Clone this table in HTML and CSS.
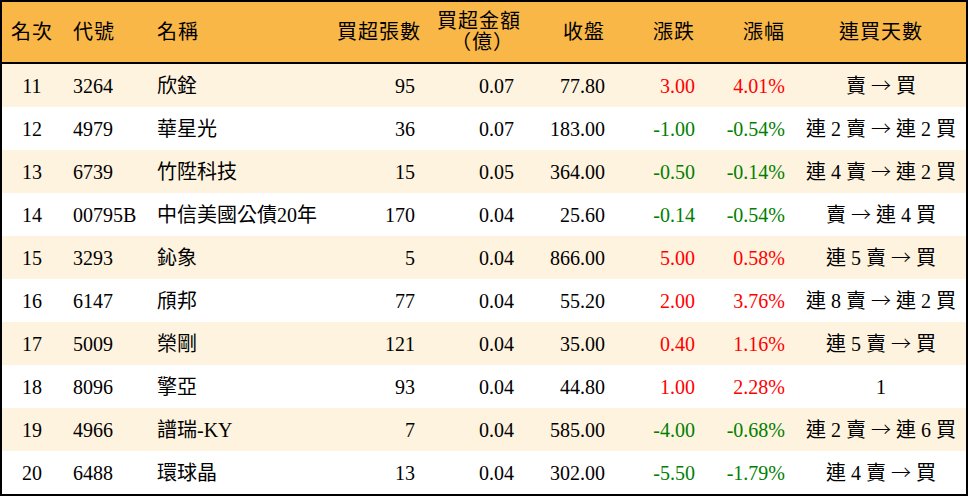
FILE: index.html
```html
<!DOCTYPE html>
<html lang="zh-Hant">
<head>
<meta charset="utf-8">
<title>買超排行</title>
<link rel="stylesheet" href="styles.css">
</head>
<body>
<table class="rank">
  <colgroup>
    <col class="c-no"><col class="c-code"><col class="c-name"><col class="c-vol"><col class="c-amt"><col class="c-close"><col class="c-chg"><col class="c-pct"><col class="c-days">
  </colgroup>
  <thead>
    <tr>
      <th class="ctr">名次</th>
      <th class="lft">代號</th>
      <th class="lft">名稱</th>
      <th class="rgt">買超張數</th>
      <th class="rgt two">買超金額<br><span class="paren">（億）</span></th>
      <th class="rgt">收盤</th>
      <th class="rgt">漲跌</th>
      <th class="rgt">漲幅</th>
      <th class="ctr">連買天數</th>
    </tr>
  </thead>
  <tbody>
    <tr class="odd"><td class="ctr">11</td><td class="lft">3264</td><td class="lft">欣銓</td><td class="rgt">95</td><td class="rgt">0.07</td><td class="rgt">77.80</td><td class="rgt up">3.00</td><td class="rgt up">4.01%</td><td class="ctr">賣 <span class="arrow">→</span> 買</td></tr>
    <tr><td class="ctr">12</td><td class="lft">4979</td><td class="lft">華星光</td><td class="rgt">36</td><td class="rgt">0.07</td><td class="rgt">183.00</td><td class="rgt down">-1.00</td><td class="rgt down">-0.54%</td><td class="ctr">連 2 賣 <span class="arrow">→</span> 連 2 買</td></tr>
    <tr class="odd"><td class="ctr">13</td><td class="lft">6739</td><td class="lft">竹陞科技</td><td class="rgt">15</td><td class="rgt">0.05</td><td class="rgt">364.00</td><td class="rgt down">-0.50</td><td class="rgt down">-0.14%</td><td class="ctr">連 4 賣 <span class="arrow">→</span> 連 2 買</td></tr>
    <tr><td class="ctr">14</td><td class="lft">00795B</td><td class="lft">中信美國公債20年</td><td class="rgt">170</td><td class="rgt">0.04</td><td class="rgt">25.60</td><td class="rgt down">-0.14</td><td class="rgt down">-0.54%</td><td class="ctr">賣 <span class="arrow">→</span> 連 4 買</td></tr>
    <tr class="odd"><td class="ctr">15</td><td class="lft">3293</td><td class="lft">鈊象</td><td class="rgt">5</td><td class="rgt">0.04</td><td class="rgt">866.00</td><td class="rgt up">5.00</td><td class="rgt up">0.58%</td><td class="ctr">連 5 賣 <span class="arrow">→</span> 買</td></tr>
    <tr><td class="ctr">16</td><td class="lft">6147</td><td class="lft">頎邦</td><td class="rgt">77</td><td class="rgt">0.04</td><td class="rgt">55.20</td><td class="rgt up">2.00</td><td class="rgt up">3.76%</td><td class="ctr">連 8 賣 <span class="arrow">→</span> 連 2 買</td></tr>
    <tr class="odd"><td class="ctr">17</td><td class="lft">5009</td><td class="lft">榮剛</td><td class="rgt">121</td><td class="rgt">0.04</td><td class="rgt">35.00</td><td class="rgt up">0.40</td><td class="rgt up">1.16%</td><td class="ctr">連 5 賣 <span class="arrow">→</span> 買</td></tr>
    <tr><td class="ctr">18</td><td class="lft">8096</td><td class="lft">擎亞</td><td class="rgt">93</td><td class="rgt">0.04</td><td class="rgt">44.80</td><td class="rgt up">1.00</td><td class="rgt up">2.28%</td><td class="ctr">1</td></tr>
    <tr class="odd"><td class="ctr">19</td><td class="lft">4966</td><td class="lft">譜瑞-KY</td><td class="rgt">7</td><td class="rgt">0.04</td><td class="rgt">585.00</td><td class="rgt down">-4.00</td><td class="rgt down">-0.68%</td><td class="ctr">連 2 賣 <span class="arrow">→</span> 連 6 買</td></tr>
    <tr><td class="ctr">20</td><td class="lft">6488</td><td class="lft">環球晶</td><td class="rgt">13</td><td class="rgt">0.04</td><td class="rgt">302.00</td><td class="rgt down">-5.50</td><td class="rgt down">-1.79%</td><td class="ctr">連 4 賣 <span class="arrow">→</span> 買</td></tr>
  </tbody>
</table>
</body>
</html>
```
FILE: styles.css
```css
html, body {
  margin: 0;
  padding: 0;
  background: #ffffff;
}

.rank {
  width: 968px;
  border-collapse: separate;
  border-spacing: 0;
  border: 2px solid #000;
  table-layout: fixed;
  font-family: "Liberation Serif", "Noto Sans CJK TC", serif;
  font-size: 20px;
  color: #000;
}

.c-no { width: 60px; }
.c-code { width: 84px; }
.c-name { width: 180px; }
.c-vol { width: 100px; }
.c-amt { width: 99px; }
.c-close { width: 91px; }
.c-chg { width: 90px; }
.c-pct { width: 90px; }
.c-days { width: 170px; }

.rank th {
  background: #f9b747;
  font-weight: normal;
  height: 62px;
  padding: 0 11px;
  border-bottom: 2px solid #000;
  line-height: 22px;
  white-space: nowrap;
  box-sizing: border-box;
  letter-spacing: 1px;
}

.rank th.two {
  line-height: 21px;
}

.rank td {
  height: 43px;
  padding: 0 11px;
  white-space: nowrap;
  line-height: 22px;
  box-sizing: border-box;
}

.rank tr.odd td {
  background: #fef3df;
}

.arrow {
  font-family: "Noto Sans CJK TC", sans-serif;
  font-weight: 300;
}

.ctr { text-align: center; }
.lft { text-align: left; }
.rgt { text-align: right; }

.rank th.ctr, .rank td.ctr {
  padding: 0;
}

.up { color: #ff0000; }
.down { color: #008000; }
```
